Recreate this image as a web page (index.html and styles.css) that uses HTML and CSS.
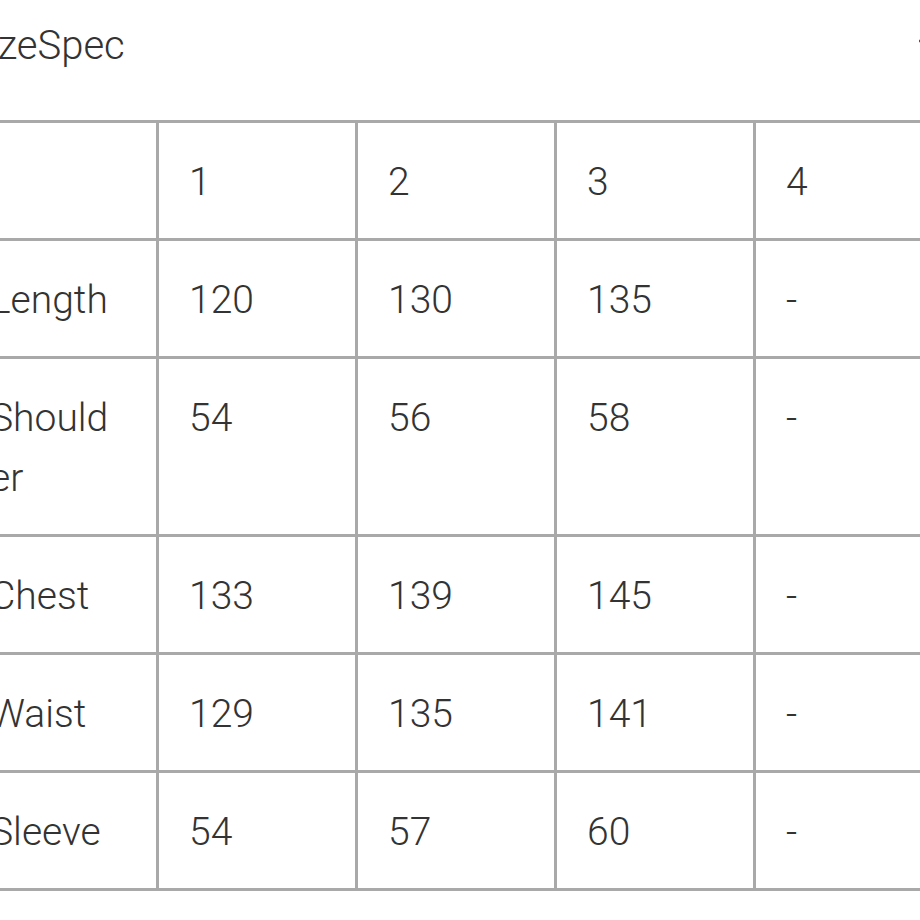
FILE: index.html
```html
<!DOCTYPE html>
<html>
<head>
<meta charset="utf-8">
<link rel="stylesheet" href="styles.css">
</head>
<body>
<div class="page">
  <div class="header">
    <div class="title">SizeSpec</div>
    <svg class="icon" width="30" height="30" viewBox="0 0 30 30"><path d="M1 15H29M15 1V29" stroke="#555" stroke-width="2.4" fill="none"/></svg>
  </div>
  <table class="spec">
    <tr><td></td><td>1</td><td>2</td><td>3</td><td>4</td></tr>
    <tr><td>Length</td><td>120</td><td>130</td><td>135</td><td>-</td></tr>
    <tr><td>Shoulder</td><td>54</td><td>56</td><td>58</td><td>-</td></tr>
    <tr><td>Chest</td><td>133</td><td>139</td><td>145</td><td>-</td></tr>
    <tr><td>Waist</td><td>129</td><td>135</td><td>141</td><td>-</td></tr>
    <tr><td>Sleeve</td><td>54</td><td>57</td><td>60</td><td>-</td></tr>
  </table>
</div>
</body>
</html>
```
FILE: styles.css
```css
html, body {
  margin: 0;
  padding: 0;
  background: #fff;
  overflow: hidden;
}
body {
  width: 920px;
  height: 920px;
  font-family: Roboto, "Liberation Sans", sans-serif;
  font-weight: 300;
  color: #333;
}
.page {
  margin-left: -43px;
  width: 1002px;
}
.header {
  display: flex;
  padding-top: 16px;
  height: 60px;
  margin-bottom: 44px;
}
.title {
  font-size: 40px;
  line-height: 60px;
  margin-left: 8px;
}
.icon {
  margin-left: auto;
  margin-right: 11px;
  margin-top: 10px;
  display: block;
}
.spec {
  border-collapse: collapse;
  table-layout: fixed;
}
.spec td {
  border: 3px solid #a9a9a9;
  width: 136px;
  padding: 29px 30px 26px;
  font-size: 39px;
  line-height: 60px;
  vertical-align: top;
  word-break: break-all;
}
```
